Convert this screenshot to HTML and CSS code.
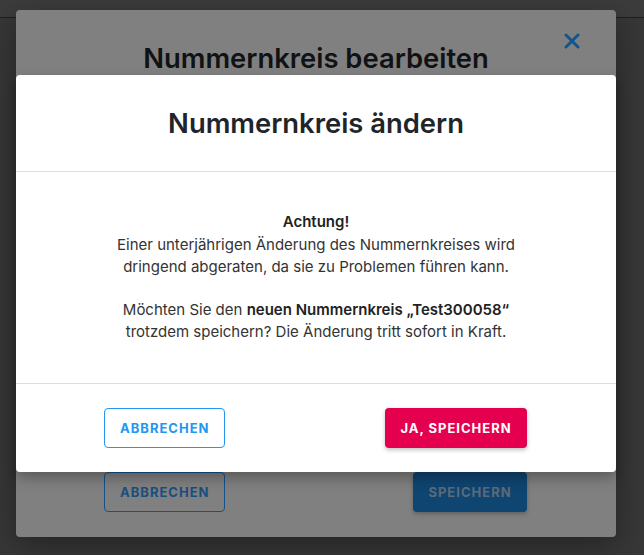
FILE: index.html
```html
<!DOCTYPE html>
<html lang="de">
<head>
<meta charset="utf-8">
<title>Nummernkreis ändern</title>
<link rel="stylesheet" href="styles.css">
</head>
<body>
<div class="topbar"></div>
<div class="page">
  <div class="back-modal">
    <div class="back-header">
      <h2 class="back-title">Nummernkreis bearbeiten</h2>
      <button class="close" aria-label="Schließen">
        <svg width="16" height="16" viewBox="0 0 16 16"><path d="M2 2 L14 14 M14 2 L2 14" stroke="currentColor" stroke-width="3" stroke-linecap="round"/></svg>
      </button>
    </div>
    <div class="back-body"></div>
    <div class="back-footer">
      <button class="btn back-outline">Abbrechen</button>
      <button class="btn back-primary">Speichern</button>
    </div>
  </div>
</div>
<div class="dialog">
  <div class="dialog-header">
    <h1 class="dialog-title">Nummernkreis ändern</h1>
  </div>
  <div class="dialog-body">
    <p><strong>Achtung!</strong><br>Einer unterjährigen Änderung des Nummernkreises wird<br>dringend abgeraten, da sie zu Problemen führen kann.</p>
    <p>Möchten Sie den <strong>neuen Nummernkreis „Test300058“</strong><br>trotzdem speichern? Die Änderung tritt sofort in Kraft.</p>
  </div>
  <div class="dialog-footer">
    <button class="btn outline">Abbrechen</button>
    <button class="btn danger">Ja, speichern</button>
  </div>
</div>
</body>
</html>
```

FILE: styles.css
```css
* { box-sizing: border-box; }
html, body { margin: 0; padding: 0; }
body {
  width: 644px;
  height: 555px;
  overflow: hidden;
  background: #373737;
  font-family: Inter, "Noto Sans", sans-serif;
  position: relative;
}
.topbar {
  height: 18px;
  background: #3c3c3c;
  border-bottom: 1px solid #1e1e1e;
}
.page {
  margin-top: -8px;
  padding: 0 28px 0 16px;
}
.back-modal {
  width: 600px;
  height: 527px;
  background: #808080;
  border-radius: 4px;
  box-shadow: 0 8px 30px rgba(0,0,0,0.35);
  display: flex;
  flex-direction: column;
}
.back-header {
  position: relative;
  height: 64px;
  display: flex;
  align-items: flex-end;
  justify-content: center;
}
.back-title {
  margin: 0;
  font-size: 27.4px;
  font-weight: 600;
  color: #111214;
  line-height: 32px;
}
.close {
  position: absolute;
  right: 36px;
  top: 23px;
  border: 0;
  background: none;
  padding: 0;
  color: #15558d;
  width: 16px;
  height: 16px;
  display: flex;
}
.back-body { flex: 1; }
.back-footer {
  display: flex;
  justify-content: space-between;
  padding: 0 89px 25px 88px;
}
.btn {
  font-family: Inter, "Noto Sans", sans-serif;
  height: 40px;
  border-radius: 4px;
  font-size: 13px;
  font-weight: 700;
  letter-spacing: 1px;
  text-transform: uppercase;
  padding: 0 15px;
  cursor: pointer;
}
.back-outline {
  width: 121px;
  background: transparent;
  border: 1px solid #14538a;
  color: #174f80;
}
.back-primary {
  width: 114px;
  background: #0f4571;
  border: 0;
  color: #5c6b7a;
  box-shadow: 0 2px 4px rgba(0,0,0,0.25);
}
.dialog {
  position: absolute;
  left: 16px;
  top: 75px;
  width: 600px;
  background: #fff;
  border-radius: 4px;
  box-shadow: 0 6px 14px rgba(0,0,0,0.3);
}
.dialog-header {
  height: 97px;
  border-bottom: 1px solid #dedede;
  display: flex;
  align-items: center;
  justify-content: center;
}
.dialog-title {
  margin: 0;
  font-size: 27.4px;
  font-weight: 600;
  color: #212529;
  line-height: 32px;
}
.dialog-body {
  height: 212px;
  border-bottom: 1px solid #dedede;
  padding: 39px 20px 0;
  text-align: center;
  font-size: 15px;
  line-height: 22.5px;
  color: #333;
}
.dialog-body p { margin: 0 0 20px; }
.dialog-body strong { font-weight: 600; color: #222; }
.dialog-footer {
  display: flex;
  justify-content: space-between;
  padding: 24px 89px 24px 88px;
}
.outline {
  width: 121px;
  background: #fff;
  border: 1px solid #2196f3;
  color: #2196f3;
}
.danger {
  width: 142px;
  background: #e4004f;
  border: 0;
  color: #fff;
  box-shadow: 0 2px 4px rgba(0,0,0,0.25);
}
```
